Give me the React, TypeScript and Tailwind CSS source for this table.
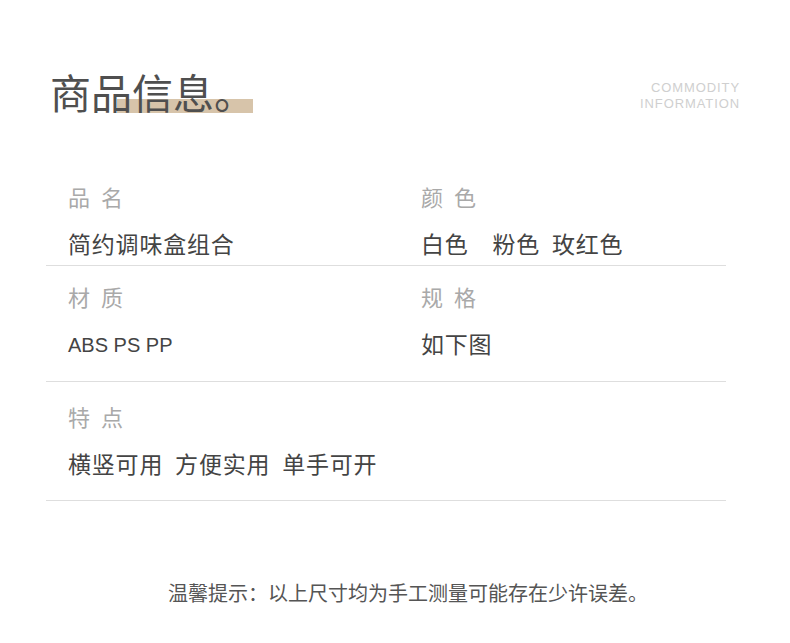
const rows = [
  [
    { label: "品 名", value: "简约调味盒组合" },
    { label: "颜 色", value: "白色    粉色  玫红色" },
  ],
  [
    { label: "材 质", value: "ABS PS PP", latin: true },
    { label: "规 格", value: "如下图" },
  ],
  [{ label: "特 点", value: "横竖可用  方便实用  单手可开" }],
];

// top padding / gap between label and value / bottom padding, one per row
const rowStyles = [
  { box: "pt-[181px] pb-[7px]", gap: "mt-[17px]" },
  { box: "pt-[15px] pb-[23px]", gap: "mt-[17px]" },
  { box: "pt-[19px] pb-[22px]", gap: "mt-[17px]" },
];

export default function App() {
  return (
    <div className="relative w-[790px] h-[643px] bg-white font-['Noto_Sans_CJK_SC',sans-serif] overflow-hidden">
      {/* header */}
      <div className="absolute left-[50px] top-[71px]">
        <div className="relative">
          <div className="absolute left-[67px] top-[28px] w-[136px] h-[14px] bg-[#d7c4aa]" />
          <h1 className="relative text-[41px] leading-[41px] font-normal text-[#4f4f4f]">商品信息。</h1>
        </div>
      </div>
      <div className="absolute right-[50px] top-[80px] text-right font-['Liberation_Sans',sans-serif] text-[13px] leading-[16px] tracking-[0.9px] text-[#cfcfcf]">
        <div>COMMODITY</div>
        <div>INFORMATION</div>
      </div>

      {/* rows */}
      <div className="mx-[46px] w-[680px]">
        {rows.map((row, i) => (
          <div key={i} className={`${rowStyles[i].box} border-b border-[#dedede]`}>
            <div className="grid grid-cols-[353px_1fr] pl-[22px]">
              {row.map((cell) => (
                <div key={cell.label}>
                  <div className="h-[30px] leading-[30px] text-[22px] tracking-[3px] text-[#a9a9a9] whitespace-pre">
                    {cell.label}
                  </div>
                  {cell.latin ? (
                    <div className={`${rowStyles[i].gap} h-[30px] leading-[34px] font-['Liberation_Sans',sans-serif] text-[20px] text-[#444] whitespace-pre`}>
                      {cell.value}
                    </div>
                  ) : (
                    <div className={`${rowStyles[i].gap} h-[30px] leading-[30px] text-[23px] tracking-[0.8px] text-[#444] whitespace-pre`}>
                      {cell.value}
                    </div>
                  )}
                </div>
              ))}
            </div>
          </div>
        ))}
      </div>

      {/* footer */}
      <div className="pt-[77px] pl-[168px] text-[20px] leading-[30px] text-[#555]">
        温馨提示：以上尺寸均为手工测量可能存在少许误差。
      </div>
    </div>
  );
}
